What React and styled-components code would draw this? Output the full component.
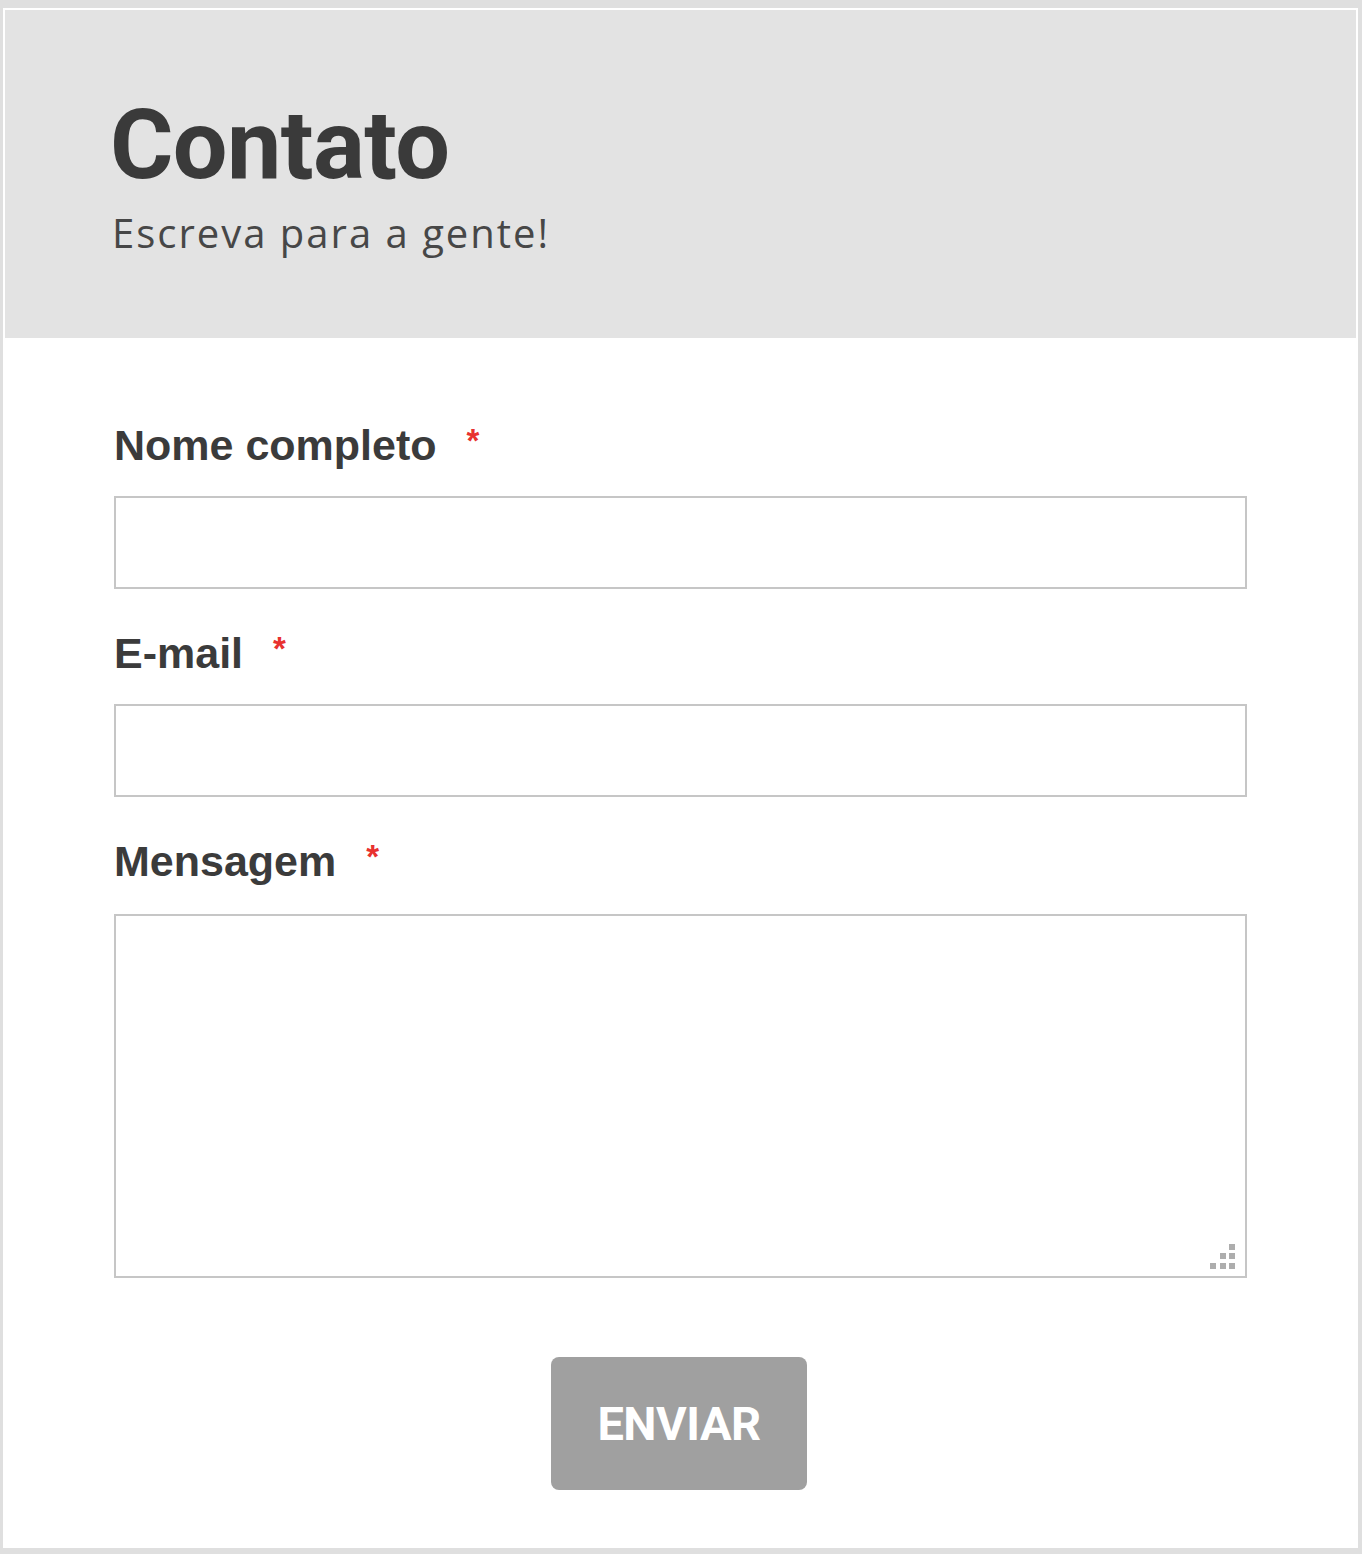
import React from "react";
import styled, { createGlobalStyle } from "styled-components";

const GlobalStyle = createGlobalStyle`
  html, body {
    margin: 0;
    padding: 0;
    background: #dfdfdf;
  }
  body {
    min-height: 1554px;
  }
`;

export default function App() {
  return (
    <>
      <GlobalStyle />
      <Card>
        <Header>
          <Title>Contato</Title>
          <Subtitle>Escreva para a gente!</Subtitle>
        </Header>
        <Form onSubmit={(e) => e.preventDefault()}>
          <Field>
            <Label>
              Nome completo<Required>*</Required>
            </Label>
            <Input type="text" />
          </Field>
          <Field>
            <Label>
              E-mail<Required>*</Required>
            </Label>
            <Input type="email" />
          </Field>
          <Field>
            <Label>
              Mensagem<Required>*</Required>
            </Label>
            <AreaWrap>
              <TextArea />
              <Grip width="26" height="26" viewBox="0 0 26 26">
                <rect x="19" y="0" width="6" height="6" />
                <rect x="10" y="9" width="6" height="6" />
                <rect x="19" y="9" width="6" height="6" />
                <rect x="0" y="19" width="6" height="6" />
                <rect x="10" y="19" width="6" height="6" />
                <rect x="19" y="19" width="6" height="6" />
              </Grip>
            </AreaWrap>
          </Field>
          <Actions>
            <SubmitButton type="submit">ENVIAR</SubmitButton>
          </Actions>
        </Form>
      </Card>
    </>
  );
}

const Card = styled.div`
  margin: 8px 4px 6px 3px;
  padding: 2px 2px 0 2px;
  background: #ffffff;
  box-sizing: border-box;
  height: 1540px;
`;

const Header = styled.header`
  background: #e3e3e3;
  height: 328px;
  box-sizing: border-box;
  padding: 85px 0 0 105px;
`;

const Title = styled.h1`
  margin: 0;
  font-family: Roboto, "Liberation Sans", sans-serif;
  font-weight: 700;
  font-size: 97px;
  line-height: 100px;
  letter-spacing: -0.6px;
  color: #3a3a3a;
`;

const Subtitle = styled.p`
  margin: 16px 0 0 2px;
  font-family: "Open Sans", "Liberation Sans", sans-serif;
  font-weight: 400;
  font-size: 40px;
  line-height: 44px;
  letter-spacing: 2px;
  color: #474747;
`;

const Form = styled.form`
  padding: 82px 109px 0 109px;
  display: flex;
  flex-direction: column;
  gap: 39px;
`;

const Field = styled.div`
  display: flex;
  flex-direction: column;
  gap: 26px;
`;

const Label = styled.label`
  font-family: "Liberation Sans", Arial, sans-serif;
  font-weight: 700;
  font-size: 43px;
  line-height: 50px;
  color: #3b3b3b;
`;

const Required = styled.span`
  display: inline-block;
  vertical-align: top;
  color: #e8312f;
  font-size: 33px;
  line-height: 33px;
  margin-left: 30px;
  margin-top: 4px;
`;

const Input = styled.input`
  display: block;
  box-sizing: border-box;
  width: 100%;
  height: 93px;
  margin: 0;
  border: 2px solid #c6c6c6;
  background: #ffffff;
  font-size: 36px;
  padding: 0 16px;
  outline: none;
`;

const AreaWrap = styled.div`
  position: relative;
  margin-top: 2px;
`;

const TextArea = styled.textarea`
  display: block;
  box-sizing: border-box;
  width: 100%;
  height: 364px;
  margin: 0;
  border: 2px solid #c6c6c6;
  background: #ffffff;
  resize: none;
  outline: none;
  font-size: 36px;
  padding: 12px 16px;
`;

const Grip = styled.svg`
  position: absolute;
  right: 11px;
  bottom: 8px;
  fill: #adadad;
`;

const Actions = styled.div`
  display: flex;
  justify-content: center;
  padding-top: 40px;
  padding-right: 3px;
`;

const SubmitButton = styled.button`
  width: 256px;
  height: 133px;
  border: none;
  border-radius: 8px;
  background: #a0a0a0;
  color: #ffffff;
  font-family: Roboto, "Liberation Sans", sans-serif;
  font-weight: 700;
  font-size: 47px;
  letter-spacing: -0.5px;
  cursor: pointer;
  padding: 0;
`;
